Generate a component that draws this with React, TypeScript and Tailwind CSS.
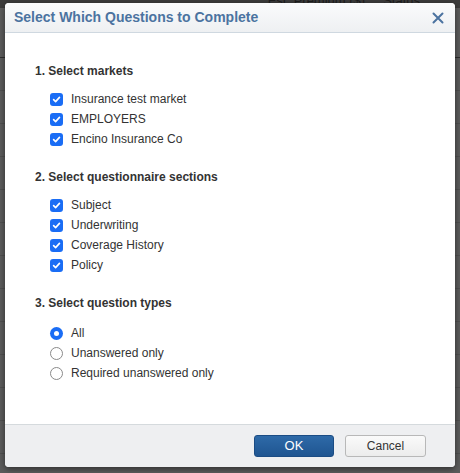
import React from "react";

const Check = () => (
  <span className="w-[13px] h-[13px] rounded-[3px] bg-[#1a6df5] flex items-center justify-center shrink-0">
    <svg width="9" height="9" viewBox="0 0 10 10">
      <path d="M1.8 5.2 L4 7.4 L8.3 2.6" fill="none" stroke="white" strokeWidth="1.8" strokeLinecap="round" strokeLinejoin="round" />
    </svg>
  </span>
);

const Radio = ({ on }: { on?: boolean }) =>
  on ? (
    <span className="w-[13px] h-[13px] rounded-full bg-[#1a6df5] flex items-center justify-center shrink-0">
      <span className="w-[5px] h-[5px] rounded-full bg-white" />
    </span>
  ) : (
    <span className="w-[13px] h-[13px] rounded-full border border-[#8a8a8a] bg-white shrink-0" />
  );

const Item = ({ children, label }: { children: React.ReactNode; label: string }) => (
  <div className="flex items-center gap-[8px] h-[20px] pl-[45px]">
    {children}
    <span className="text-[12px] text-[#333]">{label}</span>
  </div>
);

const Heading = ({ t }: { t: string }) => (
  <div className="pl-[30px] text-[12px] font-bold text-[#333] h-[16px] leading-[16px]">{t}</div>
);

export default function App() {
  const rows = Array.from({ length: 12 });
  return (
    <div
      className="relative w-[460px] h-[473px] bg-[#5c5c5c] overflow-hidden"
      style={{ fontFamily: '"Liberation Sans", Arial, sans-serif' }}
    >
      <div className="flex flex-col">
        <div className="h-[8px] bg-[#3c3c3c] flex justify-end pr-[40px] gap-[18px] text-[13px] leading-[14px] text-[#1e1e1e] overflow-hidden">
          <span className="-mt-[6px]">Est. Premium ($)</span>
          <span className="-mt-[6px]">Status</span>
        </div>
        <div className="h-[50px] border-b border-[#2e2e2e]" />
        {rows.map((_, i) => (
          <div key={i} className="h-[33px] border-b border-[#505050]" />
        ))}
      </div>

      <div className="absolute left-[5px] top-[3px] w-[450px] h-[464px] bg-white rounded-[4px] shadow-[0_2px_6px_rgba(0,0,0,0.5)] flex flex-col overflow-hidden">
        <div className="h-[30px] shrink-0 border-b border-[#cfd8e0] bg-gradient-to-b from-[#fafbfc] to-[#eef0f2] flex items-center justify-between pl-[9px] pr-[11px]">
          <span className="text-[14px] font-bold text-[#4b73a0]">Select Which Questions to Complete</span>
          <svg width="12" height="12" viewBox="0 0 12 12">
            <path d="M1.5 1.5 L10.5 10.5 M10.5 1.5 L1.5 10.5" stroke="#4b73a0" strokeWidth="2" strokeLinecap="round" />
          </svg>
        </div>

        <div className="flex-1 flex flex-col pt-[30px]">
          <Heading t="1. Select markets" />
          <div className="flex flex-col mt-[10px]">
            <Item label="Insurance test market"><Check /></Item>
            <Item label="EMPLOYERS"><Check /></Item>
            <Item label="Encino Insurance Co"><Check /></Item>
          </div>
          <div className="mt-[20px]"><Heading t="2. Select questionnaire sections" /></div>
          <div className="flex flex-col mt-[10px]">
            <Item label="Subject"><Check /></Item>
            <Item label="Underwriting"><Check /></Item>
            <Item label="Coverage History"><Check /></Item>
            <Item label="Policy"><Check /></Item>
          </div>
          <div className="mt-[20px]"><Heading t="3. Select question types" /></div>
          <div className="flex flex-col mt-[12px]">
            <Item label="All"><Radio on /></Item>
            <Item label="Unanswered only"><Radio /></Item>
            <Item label="Required unanswered only"><Radio /></Item>
          </div>
        </div>

        <div className="h-[43px] shrink-0 border-t border-[#d5dadd] bg-[#eeeff1] flex items-center justify-end gap-[11px] pr-[29px]">
          <button className="w-[80px] h-[22px] rounded-[3px] bg-gradient-to-b from-[#2e6aa8] to-[#1f5591] border border-[#1b4c84] text-white text-[13px]">
            OK
          </button>
          <button className="w-[81px] h-[22px] rounded-[3px] bg-gradient-to-b from-[#fafafa] to-[#ececec] border border-[#b8b8b8] text-[#333] text-[12px]">
            Cancel
          </button>
        </div>
      </div>
    </div>
  );
}
